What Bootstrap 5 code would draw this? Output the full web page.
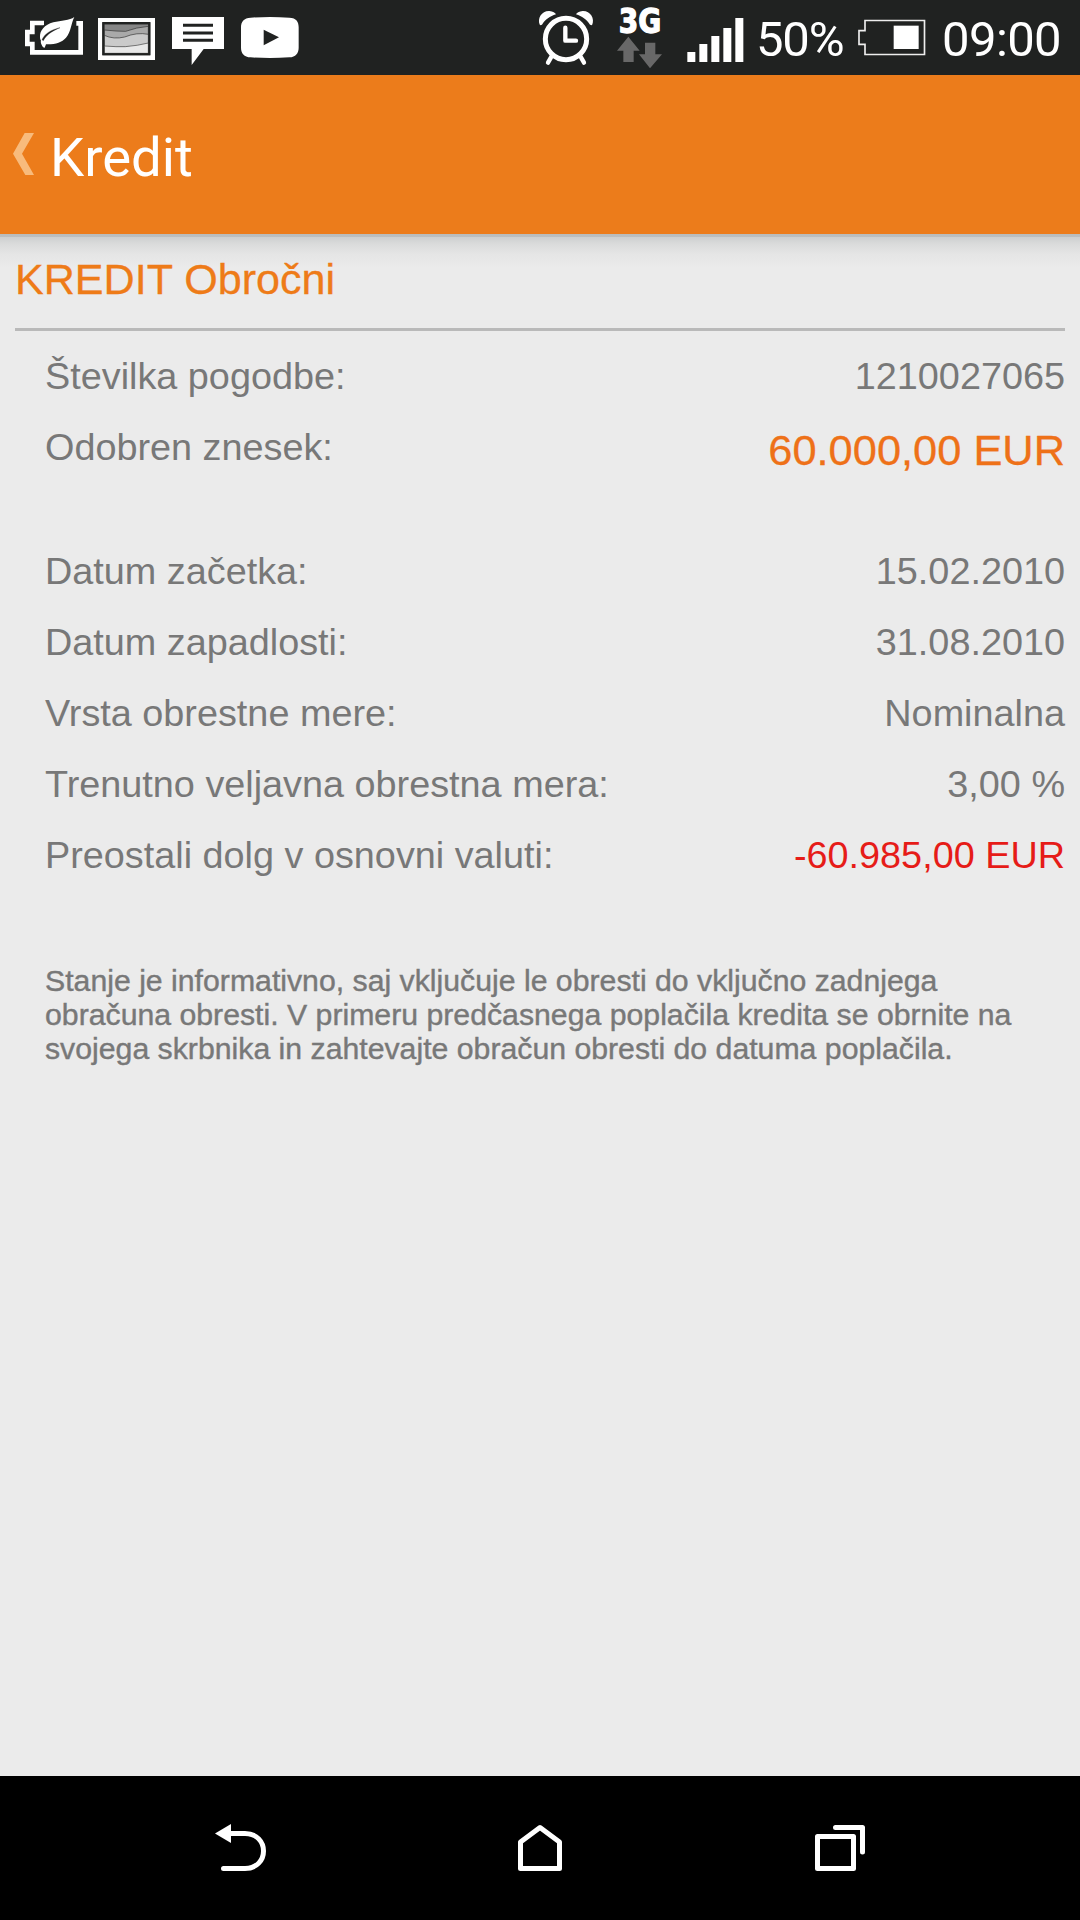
<!DOCTYPE html>
<html lang="sl">
<head>
<meta charset="utf-8">
<meta name="viewport" content="width=device-width, initial-scale=1">
<title>Kredit</title>
<link rel="stylesheet" href="https://cdn.jsdelivr.net/npm/bootstrap@5.3.0/dist/css/bootstrap.min.css">
<style>
  body { background: #ebebeb; font-family: "Liberation Sans", Arial, sans-serif; color: #787878; }
  svg { display: block; flex: none; overflow: visible; }
  .status-bar { height: 75px; background: #202221; color: #fff; padding-left: 25px; padding-right: 19px; font-family: Roboto, sans-serif; }
  .status-text { font-size: 49px; line-height: 75px; padding-top: 2px; white-space: nowrap; }
  .picture-icon { margin: 0 17px 0 15px; }
  .video-icon { margin-left: 13px; }
  .network-icon { margin-left: 24px; }
  .signal-icon { margin-left: 24px; }
  .battery-icon { margin-left: 15px; }
  .percent { width: 87px; margin-left: 12px; letter-spacing: -1.2px; }
  .clock { width: 119px; margin-left: 16px; letter-spacing: -.6px; }
  .app-header { height: 159px; background: #ec7c1b; color: #fff; padding-left: 13px; }
  .app-title { font: 400 54.5px/159px Roboto, sans-serif; padding-top: 3px; margin-left: 16px; }
  .content-area { padding: 0 15px; background: linear-gradient(#b9bcbc 0, #bcbfbf 3px, #cdcfcf 3px, #dadbdb 10px, #e5e5e5 20px, #ebebeb 34px) no-repeat; }
  .account-title { font-size: 43.1px; line-height: 91px; margin: 0 0 3px; color: #ee7b18; font-weight: 400; -webkit-text-stroke: .3px; }
  .rule { height: 3px; background: #b9b9b9; margin-bottom: 10px; }
  .detail { height: 71px; font-size: 37.8px; line-height: 71px; padding-left: 30px; white-space: nowrap; }
  .amount { font-size: 43.4px; line-height: 77px; color: #ee7118; -webkit-text-stroke: .3px; }
  .debt { color: #e61c18; }
  .group-gap { margin-top: 53px; }
  .note-text { font-size: 30.24px; line-height: 34px; margin: 73px 0 0; padding-left: 30px; white-space: nowrap; -webkit-text-stroke: .4px; }
  .nav-bar { height: 144px; background: #000; padding-left: 215px; padding-right: 214px; }
</style>
</head>
<body>
<div class="d-flex flex-column vh-100 overflow-hidden">
  <div class="status-bar d-flex justify-content-between flex-shrink-0">
    <div class="d-flex">
      <svg width="58" height="75" viewBox="75 0 174 225">
        <path d="M132 69H97V96H82V132H97V157H242V70H229" fill="none" stroke="#fff" stroke-width="14"/>
        <path d="M223 51C209 62 183 61 160 67C133 75 119 91 120 112Q120 118 123 122C120 127 128 144 134 143L138 133C166 134 185 127 198 113C213 97 213 70 223 51Z" fill="#fff" stroke="#202221" stroke-width="10" paint-order="stroke" stroke-linejoin="round"/>
        <path d="M126 119C134 102 151 90 180 83C153 94 137 107 130 122Z" fill="#202221" stroke="#202221" stroke-width="1"/>
      </svg>
      <svg class="picture-icon" width="57" height="75" viewBox="293 0 171 225">
        <path fill="#fff" d="M293 54H464V180H293Z"/><path fill="#202221" d="M306 66H450V166H306Z"/>
        <path fill="#868686" d="M312 73H444V110H312Z"/>
        <path fill="#a9a9a9" stroke="#303030" stroke-width="2" d="M312 90Q350 94 376 94Q408 82 444 79V120H312Z"/>
        <path fill="#cacaca" stroke="#303030" stroke-width="2" d="M312 106Q340 119 373 111Q410 96 444 103V142H312Z"/>
        <path fill="#e8e8e8" stroke="#404040" stroke-width="2" d="M312 138Q350 141 375 140Q412 137 444 129V160H312Z"/>
        <path fill="none" stroke="#202221" stroke-width="6" d="M309 70H447V163H309Z"/>
      </svg>
      <svg width="56" height="75" viewBox="516 0 168 225">
        <path fill="#fff" d="M516 51H672V147H611L575 195V147H516Z"/>
        <path stroke="#202221" stroke-width="9" d="M549 76H639M549 99H639M549 121H639"/>
      </svg>
      <svg class="video-icon" width="58" height="75" viewBox="723 0 174 225">
        <path fill="#fff" d="M752 53Q810 49 868 53C889 54 896 65 896 82V143C896 160 887 171 868 172Q810 176 752 172C732 171 723 160 723 143V82C723 65 732 54 752 53Z"/>
        <path fill="#202221" d="M791 89L837 112L791 136Z"/>
      </svg>
    </div>
    <div class="d-flex">
      <svg width="54" height="75" viewBox="57 0 162 225">
        <g fill="none" stroke="#fff" stroke-linecap="round">
          <circle cx="138" cy="117" r="62" stroke-width="15"/>
          <path d="M136 83V122H168" stroke-width="13" stroke-linejoin="round"/>
          <path d="M93 172L84 188M183 172L192 188" stroke-width="13"/>
        </g>
        <path fill="#fff" d="M60 76C50 55 66 32 88 33C99 34 106 38 108 43C90 49 76 58 66 74ZM216 76C226 55 210 32 188 33C177 34 170 38 168 43C186 49 200 58 210 74Z"/>
      </svg>
      <svg class="network-icon" width="46" height="75" viewBox="290 0 138 225">
        <text transform="translate(295 100) scale(.84 1)" font-family="'DejaVu Sans', sans-serif" font-weight="700" font-size="100" fill="#fff" stroke="#fff" stroke-width="4">3G</text>
        <path fill="#686868" d="M324 110L358 152H340V186H309V152H290ZM389 205L356 163H374V128H405V163H425Z"/>
      </svg>
      <svg class="signal-icon" width="57" height="75" viewBox="500 0 171 225">
        <path fill="#fff" d="M501 156H525V186H501ZM537 132H561V186H537ZM573 108H597V186H573ZM609 84H633V186H609ZM645 54H669V186H645Z"/>
      </svg>
      <div class="status-text percent">50%</div>
      <svg class="battery-icon" width="68" height="75" viewBox="355 0 204 225">
        <path fill="none" stroke="#eee" stroke-width="5" d="M376 61.500H554.500V163.500H376V133H358V92H376Z"/>
        <path fill="#fff" d="M462 77H537V147H462Z"/>
      </svg>
      <div class="status-text clock">09:00</div>
    </div>
  </div>

  <header class="app-header d-flex flex-shrink-0">
    <svg width="21" height="159" viewBox="39 -105 63 477">
      <path fill="#f8bb7c" d="M74 69H102L66 131L102 195H76L39 131Z"/>
    </svg>
    <div class="app-title">Kredit</div>
  </header>

  <main class="content-area flex-grow-1">
    <h1 class="account-title">KREDIT Obročni</h1>
    <div class="rule"></div>
    <div class="detail d-flex justify-content-between"><span>Številka pogodbe:</span><span>1210027065</span></div>
    <div class="detail d-flex justify-content-between"><span>Odobren znesek:</span><span class="amount">60.000,00 EUR</span></div>
    <div class="detail group-gap d-flex justify-content-between"><span>Datum začetka:</span><span>15.02.2010</span></div>
    <div class="detail d-flex justify-content-between"><span>Datum zapadlosti:</span><span>31.08.2010</span></div>
    <div class="detail d-flex justify-content-between"><span>Vrsta obrestne mere:</span><span>Nominalna</span></div>
    <div class="detail d-flex justify-content-between"><span>Trenutno veljavna obrestna mera:</span><span>3,00 %</span></div>
    <div class="detail d-flex justify-content-between"><span>Preostali dolg v osnovni valuti:</span><span class="debt">-60.985,00 EUR</span></div>
    <p class="note-text">Stanje je informativno, saj vključuje le obresti do vključno zadnjega<br>obračuna obresti. V primeru predčasnega poplačila kredita se obrnite na<br>svojega skrbnika in zahtevajte obračun obresti do datuma poplačila.</p>
  </main>

  <nav class="nav-bar d-flex justify-content-between flex-shrink-0">
    <svg width="51" height="144" viewBox="215 0 51 144">
      <path fill="#fff" d="M215 57.500L231 48V67Z"/>
      <path fill="none" stroke="#fff" stroke-width="5" stroke-linecap="round" d="M229 57.500H245C257 57.500 263.500 66 263.500 75S257 92.500 245 92.500H223.500"/>
    </svg>
    <svg width="46" height="144" viewBox="518 0 46 144">
      <path fill="none" stroke="#fff" stroke-width="5" stroke-linejoin="round" d="M540 51.500L559.500 66V92.500H520.500V66Z"/>
    </svg>
    <svg width="51" height="144" viewBox="815 0 51 144">
      <path fill="none" stroke="#fff" stroke-width="5" stroke-linejoin="round" stroke-linecap="round" d="M817.500 60.500H853.500V92.500H817.500ZM835.500 51.500H862.500V76"/>
    </svg>
  </nav>
</div>
<script src="https://cdn.jsdelivr.net/npm/bootstrap@5.3.0/dist/js/bootstrap.bundle.min.js"></script>
</body>
</html>
